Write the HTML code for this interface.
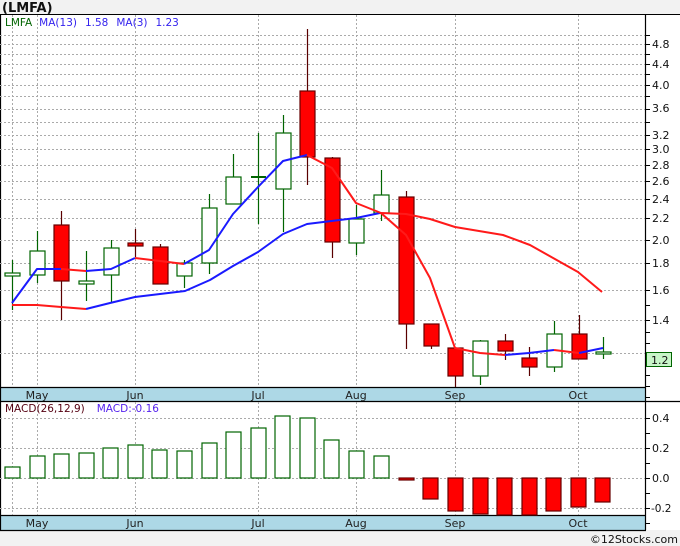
<!DOCTYPE html>
<html><head><meta charset="utf-8"><style>
body{margin:0;background:#f2f2f2;width:680px;height:546px;overflow:hidden}
svg{display:block;font-family:"DejaVu Sans","Liberation Sans",sans-serif}
</style></head><body>
<svg width="680" height="546" viewBox="0 0 680 546" xmlns="http://www.w3.org/2000/svg">
<rect x="0" y="0" width="680" height="546" fill="#f2f2f2"/>
<text x="2" y="12" font-size="13" font-weight="bold" fill="#111">(LMFA)</text>
<rect x="0" y="14" width="680" height="516" fill="#fff"/>
<line x1="0" y1="14.5" x2="680" y2="14.5" stroke="#000"/>
<rect x="0" y="387" width="646" height="14" fill="#add8e6"/>
<rect x="0" y="515" width="646" height="15" fill="#add8e6"/>
<g stroke="#000" stroke-width="1.2">
<line x1="0" y1="387.5" x2="646" y2="387.5"/>
<line x1="0" y1="401.5" x2="680" y2="401.5"/>
<line x1="0" y1="515.5" x2="646" y2="515.5"/>
<line x1="0" y1="530.5" x2="646" y2="530.5"/>
<line x1="0.5" y1="14" x2="0.5" y2="530"/>
<line x1="645.5" y1="14" x2="645.5" y2="530"/>
</g>
<g stroke="#aaa" stroke-dasharray="2,2" stroke-width="1">
<path d="M0 35.5H645M0 44.5H645M0 54.5H645M0 64.5H645M0 74.5H645M0 85.5H645M0 96.5H645M0 109.5H645M0 122.5H645M0 135.5H645M0 149.5H645M0 165.5H645M0 181.5H645M0 199.5H645M0 218.5H645M0 240.5H645M0 263.5H645M0 290.5H645M0 320.5H645M0 353.5H645"/>
<path d="M0 418.5H645M0 448.5H645M0 478.5H645M0 508.5H645"/>
<path d="M12.5 15V387M37.5 15V387M135.5 15V387M258.5 15V387M356.5 15V387M455.5 15V387M578.5 15V387"/>
<path d="M12.5 402V515M37.5 402V515M135.5 402V515M258.5 402V515M356.5 402V515M455.5 402V515M578.5 402V515"/>
</g>
<g stroke="#000"><path d="M646 35.5h4M646 44.5h4M646 54.5h4M646 64.5h4M646 74.5h4M646 85.5h4M646 96.5h4M646 109.5h4M646 122.5h4M646 135.5h4M646 149.5h4M646 165.5h4M646 181.5h4M646 199.5h4M646 218.5h4M646 240.5h4M646 263.5h4M646 290.5h4M646 305.5h4M646 320.5h4M646 332.5h4M646 343.5h4M646 353.5h4M646 375.5h4M646 386.5h4M646 397.5h4M646 418.5h4M646 433.5h4M646 448.5h4M646 463.5h4M646 478.5h4M646 493.5h4M646 508.5h4M646 523.5h4"/></g>
<g font-size="11" fill="#111">
<text x="652" y="48">4.8</text><text x="652" y="68">4.4</text><text x="652" y="89">4.0</text><text x="652" y="112">3.6</text><text x="652" y="139">3.2</text><text x="652" y="153">3.0</text><text x="652" y="169">2.8</text><text x="652" y="185">2.6</text><text x="652" y="203">2.4</text><text x="652" y="222">2.2</text><text x="652" y="244">2.0</text><text x="652" y="267">1.8</text><text x="652" y="294">1.6</text><text x="652" y="324">1.4</text>
<text x="652" y="422">0.4</text><text x="652" y="452">0.2</text><text x="652" y="482">0.0</text><text x="651" y="512" font-size="10.5">-0.2</text>
</g>
<rect x="646.5" y="352.5" width="25" height="14" fill="#c8f5c8" stroke="#006400"/>
<text x="651" y="364" font-size="11" fill="#111">1.2</text>
<g font-size="11" fill="#222" text-anchor="middle">
<text x="37" y="399">May</text><text x="135" y="399">Jun</text><text x="258" y="399">Jul</text><text x="356" y="399">Aug</text><text x="455" y="399">Sep</text><text x="578" y="399">Oct</text>
<text x="37" y="527">May</text><text x="135" y="527">Jun</text><text x="258" y="527">Jul</text><text x="356" y="527">Aug</text><text x="455" y="527">Sep</text><text x="578" y="527">Oct</text>
</g>
<text x="5" y="26" font-size="10.5"><tspan fill="#006400">LMFA</tspan><tspan fill="#3322ee" dx="7">MA(13)</tspan><tspan fill="#3322ee" dx="8">1.58</tspan><tspan fill="#3322ee" dx="8">MA(3)</tspan><tspan fill="#3322ee" dx="8">1.23</tspan></text>
<text x="5" y="412" font-size="10.5"><tspan fill="#550011">MACD(26,12,9)</tspan><tspan fill="#5522ee" dx="12">MACD:-0.16</tspan></text>
<g stroke="#006400" stroke-width="1.2">
<path d="M12.5 260V310M37.5 231V283M86.5 251V301M111.5 240V303M184.5 260V288M209.5 194V274M233.5 154V204M258.5 133V224M283.5 115V232M356.5 205V255M381.5 170V221M480.5 340V385M554.5 321V372M603.5 337V359"/>
</g>
<g stroke="#5a0000" stroke-width="1.2">
<path d="M61.5 211V320M135.5 229V257M160.5 244V284M307.5 29V185M332.5 157V258M406.5 191V349M431.5 324V349M455.5 348V387M505.5 334V360M529.5 347V376M579.5 315V359"/>
</g>
<g fill="#fff" stroke="#006400" stroke-width="1.2">
<rect x="5" y="273" width="15" height="3"/>
<rect x="30" y="251" width="15" height="24"/>
<rect x="79" y="281" width="15" height="3"/>
<rect x="104" y="248" width="15" height="27"/>
<rect x="177" y="263" width="15" height="13"/>
<rect x="202" y="208" width="15" height="55"/>
<rect x="226" y="177" width="15" height="27"/>
<rect x="276" y="133" width="15" height="56"/>
<rect x="349" y="219" width="15" height="24"/>
<rect x="374" y="195" width="15" height="18"/>
<rect x="473" y="341" width="15" height="35"/>
<rect x="547" y="334" width="15" height="33"/>
<rect x="596" y="352" width="15" height="2"/>
</g>
<rect x="251" y="176" width="15" height="2" fill="#006400"/>
<g fill="#ff0000" stroke="#660000" stroke-width="1.2">
<rect x="54" y="225" width="15" height="56"/>
<rect x="128" y="243" width="15" height="3"/>
<rect x="153" y="247" width="15" height="37"/>
<rect x="300" y="91" width="15" height="66"/>
<rect x="325" y="158" width="15" height="84"/>
<rect x="399" y="197" width="15" height="127"/>
<rect x="424" y="324" width="15" height="22"/>
<rect x="448" y="348" width="15" height="28"/>
<rect x="498" y="341" width="15" height="10"/>
<rect x="522" y="358" width="15" height="9"/>
<rect x="572" y="334" width="15" height="25"/>
</g>
<g fill="none" stroke-width="2" stroke-linejoin="round">
<polyline stroke="#ff1a1a" points="12,305 37,305 61,307 86,309"/>
<polyline stroke="#1a1aff" points="86,309 110,303 135,297 185,291 210,280 233,266 258,252 283,234 307,224 356,218 380,213"/>
<polyline stroke="#ff1a1a" points="380,213 406,214 430,219 455,227 503,235 530,245 578,272 602,292"/>
<polyline stroke="#1a1aff" points="12,303 37,269 61,269"/>
<polyline stroke="#ff1a1a" points="61,269 86,271"/>
<polyline stroke="#1a1aff" points="86,271 111,269 135,258"/>
<polyline stroke="#ff1a1a" points="135,258 160,261 184,264"/>
<polyline stroke="#1a1aff" points="184,264 209,250 233,214 258,187 283,161 307,155"/>
<polyline stroke="#ff1a1a" points="307,155 332,168 356,203 381,213 406,235 430,278 455,348 480,353 505,355"/>
<polyline stroke="#1a1aff" points="505,355 529,353 554,350"/>
<polyline stroke="#ff1a1a" points="554,350 579,353"/>
<polyline stroke="#1a1aff" points="579,353 603,348"/>
</g>
<g fill="#fff" stroke="#006400" stroke-width="1.2">
<rect x="5" y="467" width="15" height="11"/>
<rect x="30" y="456" width="15" height="22"/>
<rect x="54" y="454" width="15" height="24"/>
<rect x="79" y="453" width="15" height="25"/>
<rect x="103" y="448" width="15" height="30"/>
<rect x="128" y="445" width="15" height="33"/>
<rect x="152" y="450" width="15" height="28"/>
<rect x="177" y="451" width="15" height="27"/>
<rect x="202" y="443" width="15" height="35"/>
<rect x="226" y="432" width="15" height="46"/>
<rect x="251" y="428" width="15" height="50"/>
<rect x="275" y="416" width="15" height="62"/>
<rect x="300" y="418" width="15" height="60"/>
<rect x="324" y="440" width="15" height="38"/>
<rect x="349" y="451" width="15" height="27"/>
<rect x="374" y="456" width="15" height="22"/>
</g>
<g fill="#ff0000" stroke="#660000" stroke-width="1.2">
<rect x="399" y="478" width="15" height="2"/>
<rect x="423" y="478" width="15" height="21"/>
<rect x="448" y="478" width="15" height="33"/>
<rect x="473" y="478" width="15" height="36"/>
<rect x="497" y="478" width="15" height="37"/>
<rect x="522" y="478" width="15" height="37"/>
<rect x="546" y="478" width="15" height="33"/>
<rect x="571" y="478" width="15" height="29"/>
<rect x="595" y="478" width="15" height="24"/>
</g>
<text x="678" y="543" font-size="11" fill="#111" text-anchor="end">©12Stocks.com</text>
</svg>
</body></html>
